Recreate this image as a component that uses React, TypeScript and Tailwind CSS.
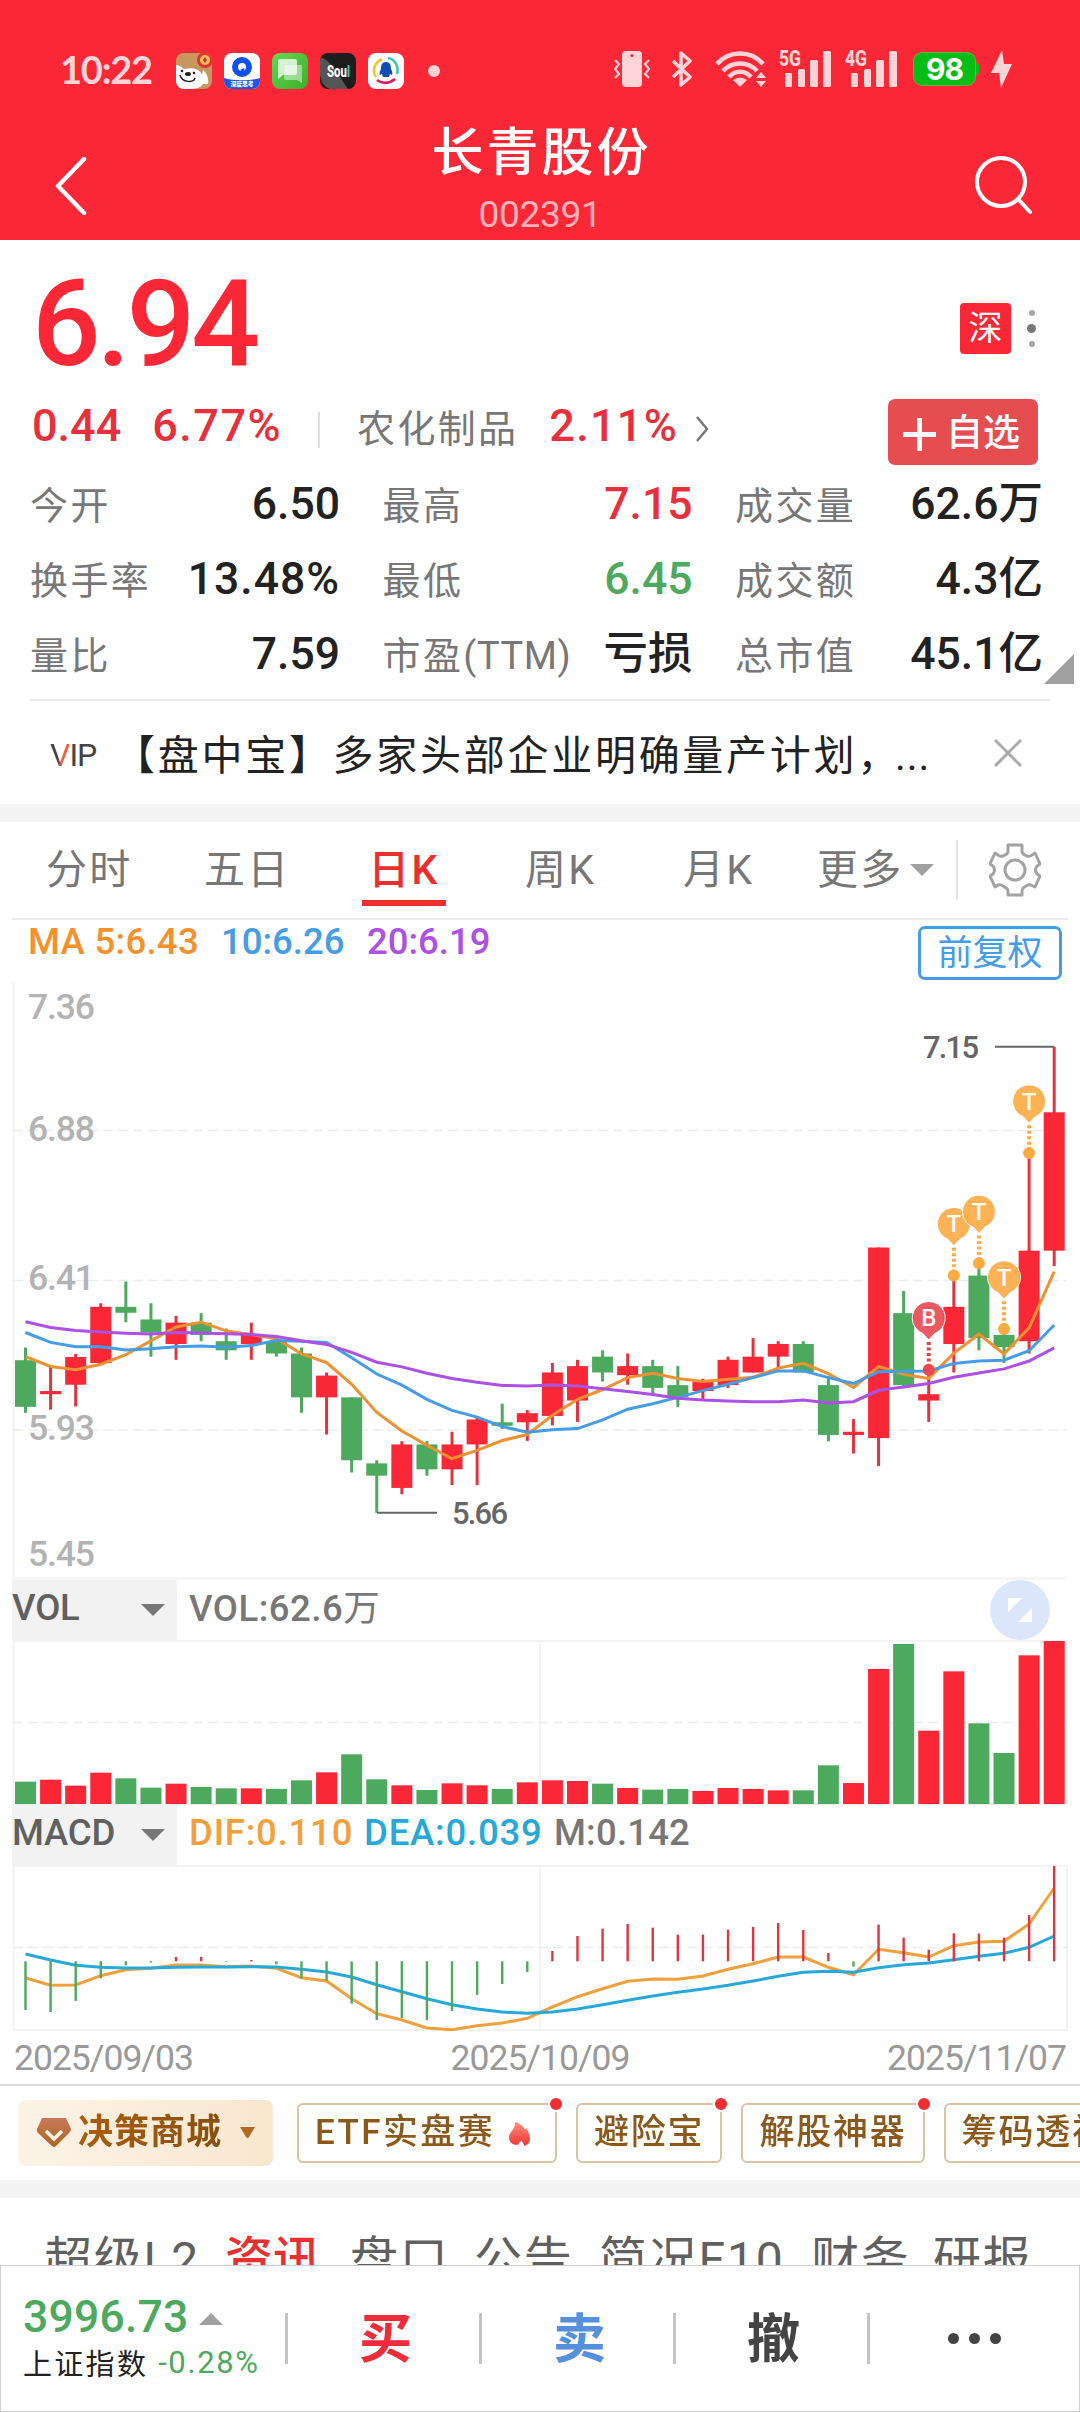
import React from "react";

type Candle = [number, number, number, number, 0 | 1];

// high, body top, body bottom, low, rising
const candles: Candle[] = [
	[980, 1012, 1130, 1145, 0],
	[1028, 1090, 1098, 1137, 1],
	[996, 1004, 1074, 1129, 1],
	[868, 877, 1019, 1019, 1],
	[813, 877, 892, 916, 0],
	[868, 909, 942, 1003, 0],
	[900, 917, 971, 1011, 1],
	[893, 917, 948, 964, 0],
	[932, 964, 987, 1011, 0],
	[917, 948, 971, 1011, 1],
	[964, 964, 995, 1003, 0],
	[980, 995, 1106, 1145, 0],
	[1043, 1051, 1106, 1200, 1],
	[1106, 1106, 1265, 1296, 0],
	[1265, 1273, 1304, 1398, 0],
	[1217, 1225, 1335, 1351, 1],
	[1217, 1225, 1288, 1304, 0],
	[1193, 1225, 1288, 1328, 1],
	[1154, 1162, 1225, 1328, 1],
	[1122, 1169, 1178, 1186, 0],
	[1138, 1146, 1169, 1216, 1],
	[1019, 1043, 1153, 1177, 1],
	[1011, 1027, 1114, 1168, 1],
	[987, 1003, 1043, 1066, 0],
	[995, 1027, 1050, 1074, 1],
	[1011, 1027, 1082, 1100, 0],
	[1027, 1075, 1106, 1130, 0],
	[1059, 1066, 1090, 1114, 1],
	[1003, 1011, 1075, 1082, 1],
	[956, 1003, 1043, 1043, 1],
	[964, 971, 1003, 1035, 1],
	[964, 971, 1043, 1043, 0],
	[1051, 1075, 1201, 1217, 0],
	[1161, 1193, 1201, 1248, 1],
	[727, 727, 1209, 1280, 1],
	[837, 893, 1075, 1082, 0],
	[1030, 1098, 1114, 1168, 1],
	[800, 877, 971, 1043, 1],
	[770, 798, 956, 987, 0],
	[933, 948, 979, 1019, 0],
	[490, 735, 964, 995, 1],
	[219, 385, 735, 774, 1],
];

const ma5 = [
	1003, 1028, 1036, 1022, 998, 963, 928, 916, 938, 947, 958, 996, 1018, 1073,
	1144, 1191, 1227, 1261, 1240, 1215, 1200, 1151, 1111, 1086, 1056, 1045, 1058,
	1066, 1060, 1055, 1032, 1020, 1046, 1081, 1028, 1048, 1058, 994, 946, 996,
	930, 788,
];
const ma10 = [
	942, 967, 978, 978, 986, 983, 978, 976, 979, 975, 962, 964, 967, 1006, 1047,
	1075, 1111, 1139, 1156, 1180, 1194, 1188, 1185, 1163, 1136, 1122, 1106, 1089,
	1073, 1056, 1039, 1039, 1056, 1071, 1041, 1040, 1039, 1020, 1014, 1012, 988,
	923,
];
const ma20 = [
	915, 929, 937, 941, 944, 946, 942, 943, 945, 947, 952, 963, 972, 992, 1017,
	1029, 1045, 1058, 1068, 1076, 1077, 1075, 1077, 1084, 1091, 1099, 1108, 1113,
	1115, 1117, 1117, 1113, 1120, 1117, 1088, 1080, 1071, 1055, 1044, 1034, 1014,
	981,
];
const volumes = [
	67, 73, 55, 94, 77, 49, 61, 51, 47, 47, 45, 71, 95, 149, 74, 56, 42, 62, 56,
	45, 65, 71, 69, 61, 48, 43, 45, 39, 48, 45, 41, 41, 116, 63, 405, 480, 220,
	398, 242, 153, 446, 489,
];
const macd = [
	-146, -152, -119, -51, -12, -4, 13, 13, -2, 4, -9, -51, -59, -127, -176, -170,
	-177, -149, -101, -68, -32, 31, 76, 98, 112, 101, 80, 80, 95, 103, 115, 94,
	25, -16, 110, 71, 35, 84, 83, 71, 139, 286,
];
const dif = [
	1224, 1246, 1245, 1217, 1199, 1195, 1185, 1185, 1190, 1188, 1195, 1223, 1233,
	1286, 1331, 1350, 1374, 1379, 1367, 1359, 1345, 1311, 1280, 1256, 1234, 1227,
	1228, 1218, 1198, 1181, 1161, 1161, 1192, 1214, 1138, 1148, 1161, 1127, 1116,
	1114, 1062, 954,
];
const dea = [
	1152, 1170, 1186, 1192, 1194, 1194, 1192, 1191, 1191, 1190, 1191, 1198, 1206,
	1221, 1244, 1265, 1286, 1304, 1317, 1326, 1330, 1326, 1317, 1304, 1291, 1278,
	1267, 1257, 1246, 1233, 1219, 1207, 1204, 1207, 1193, 1184, 1179, 1169, 1159,
	1150, 1132, 1098,
];

const RED = "#fa2836";
const GREEN = "#4da95e";

const cx = (i: number) => 25.5 + i * 25.09;
const ky = (v: number) => (v - 53) / 2.529;
const my = (v: number) => (v - 888) / 3 + 1;
const points = (values: number[], y: (v: number) => number) =>
	values.map((v, i) => `${cx(i).toFixed(1)},${y(v).toFixed(1)}`).join(" ");

const pins = [
	{ i: 37, y: 667, label: "T" },
	{ i: 38, y: 636, label: "T" },
	{ i: 39, y: 802, label: "T" },
	{ i: 40, y: 357, label: "T" },
	{ i: 36, y: 905, label: "B" },
];

const Caret: React.FC<{ color: string }> = ({ color }) => (
	<svg width="24" height="12" viewBox="0 0 24 12">
		<path d="M0 0h24L12 12z" fill={color} />
	</svg>
);

const Signal: React.FC<{ label: string }> = ({ label }) => (
	<svg className="overflow-visible" width="52" height="40" viewBox="0 0 52 40" fill="#ffd4d7">
		<text x="0" y="17" fontSize="22" fontWeight="800" textLength="22" lengthAdjust="spacingAndGlyphs">
			{label}
		</text>
		<rect x="6" y="24" width="7" height="14" rx="1.5" />
		<rect x="19" y="20" width="7" height="18" rx="1.5" />
		<rect x="31" y="11" width="8" height="27" rx="1.5" />
		<rect x="44" y="2" width="8" height="36" rx="1.5" />
	</svg>
);

const StatusBar: React.FC = () => (
	<div className="flex h-[110px] items-end pb-[21px] pl-[60px] text-[#ffd4d7]">
		<div className="flex h-9 w-[116px] items-center pb-1 font-['Lato','Roboto',sans-serif] text-[38px] font-bold leading-9 tracking-[-1.2px]">
			10:22
		</div>
		<div className="flex gap-3">
			<svg width="36" height="36" viewBox="0 0 36 36">
				<defs>
					<clipPath id="tile">
						<rect width="36" height="36" rx="8" />
					</clipPath>
				</defs>
				<g clipPath="url(#tile)">
					<rect width="36" height="36" fill="#c8965f" />
					<path d="M0 12c5 0 6 4 9 4 8-2 15 0 17 6l1-5c4 3 6 9 5 14h-5c-2 4-8 5-14 5H6c-4-1-6-3-6-7z" fill="#fff" />
					<circle cx="29" cy="7" r="8" fill="#d93a2c" />
					<circle cx="29" cy="7" r="5" fill="#f3bb5e" />
					<path d="M29 4l2 3-2 3-2-3z" fill="#c0392b" />
				</g>
				<ellipse cx="12" cy="21" rx="3" ry="2" fill="#222" />
				<circle cx="6" cy="18" r="1.3" fill="#222" />
				<circle cx="18" cy="20" r="1.3" fill="#222" />
				<path d="M4 22c2 8 14 8 15 3" stroke="#222" strokeWidth="1.5" fill="none" />
			</svg>
			<svg width="36" height="36" viewBox="0 0 36 36">
				<g clipPath="url(#tile)">
					<rect width="36" height="36" fill="#fff" />
					<path d="M0 25c9 3 27 3 36 0v11H0z" fill="#1f55e8" />
				</g>
				<circle cx="18" cy="14" r="7" stroke="#0f50f5" strokeWidth="6" fill="none" />
				<path d="M16 17l4-2 1 5z" fill="#0f50f5" />
				<text x="18" y="33" fontSize="5.800" fontWeight="900" textAnchor="middle" fill="#fff">
					深度思考
				</text>
			</svg>
			<svg width="36" height="36" viewBox="0 0 36 36">
				<defs>
					<linearGradient id="msg" x1="0" y1="0" x2="1" y2="1">
						<stop offset="0" stopColor="#62d84f" />
						<stop offset="1" stopColor="#3eae2b" />
					</linearGradient>
				</defs>
				<rect width="36" height="36" rx="8" fill="url(#msg)" />
				<path d="M13 12h17v18l-5-3H14q-2 0-2-2z" fill="#fff" opacity=".45" />
				<path d="M8 6h15q2 0 2 2v12q0 2-2 2H11l-5 4V8q0-2 2-2z" fill="#fff" opacity=".75" />
			</svg>
			<svg width="36" height="36" viewBox="0 0 36 36">
				<g clipPath="url(#tile)">
					<rect width="36" height="36" fill="#1d1d1d" />
					<path d="M0 4c12 4 17 16 28 32H10C4 34 0 28 0 20z" fill="#555" />
				</g>
				<text x="7" y="24" fontSize="17" fontWeight="800" textLength="23" lengthAdjust="spacingAndGlyphs" fill="#fff">
					Sou<tspan fill="#2fd3c4">l</tspan>
				</text>
			</svg>
			<svg width="36" height="36" viewBox="0 0 36 36" fill="none" strokeWidth="2.6">
				<rect width="36" height="36" rx="8" fill="#fff" />
				<path d="M8 24c-4-6-2-14 6-18" stroke="#f5c62b" />
				<path d="M20 5c7 1 11 8 9 16" stroke="#3cc9a2" />
				<path d="M9 27c5 4 12 4 18-1" stroke="#e0165d" />
				<path d="M18 9c4 0 5 3 5 7 1 2 2 4 1 6l-2-1-1 3h-6l-1-3-2 1c-1-2 0-4 1-6 0-4 1-7 5-7z" fill="#0f4fb5" />
			</svg>
		</div>
		<div className="mb-3 ml-6 h-3 w-3 rounded-full bg-[#ffd4d7]" />
		<div className="ml-[174px] flex items-center">
			<svg width="36" height="36" viewBox="0 0 36 36" fill="none" stroke="#ffd4d7" strokeWidth="2.200">
				<rect x="8" y="0" width="20" height="36" rx="4" fill="#ffd4d7" stroke="none" />
				<circle cx="18" cy="4.500" r="1.600" fill={RED} stroke="none" />
				<path d="M1 9l4 4-4 5 4 5-4 4M35 9l-4 4 4 5-4 5 4 4" />
			</svg>
			<svg className="ml-[21px]" width="22" height="36" viewBox="0 0 22 36" fill="none" stroke="#ffd4d7" strokeWidth="3.600">
				<path d="M2 10l17 16-9 8V2l9 8L2 26" strokeLinejoin="round" />
			</svg>
			<svg className="ml-[22px]" width="52" height="36" viewBox="0 0 52 36" fill="none" stroke="#ffd4d7" strokeWidth="4.500">
				<path d="M2 13C14-1 36-1 48 13M8 20c9-10 25-10 34 0M14 26c6-7 16-7 22 0" />
				<path d="M25 36l-7-7q7-5 14 0z" fill="#ffd4d7" stroke="none" />
				<path d="M46 21l5 6H41zM46 36l5-6H41z" fill="#ffd4d7" stroke="none" />
			</svg>
			<div className="ml-3 flex gap-3.5">
				<Signal label="5G" />
				<Signal label="4G" />
			</div>
			<div className="ml-4 flex h-[34px] w-[63px] items-center justify-center rounded-[9px] border border-[#7fa839] bg-[#04bd17] font-['Inter',sans-serif] text-[30px] font-bold leading-none tracking-[-1px] text-white">
				98
			</div>
			<div className="h-3 w-[3px] rounded-r bg-[#04bd17]" />
			<svg className="ml-3" width="21" height="38" viewBox="0 0 21 38" fill="#ffd4d7">
				<path d="M11 0L0 23h8l2 15L21 14h-8z" />
			</svg>
		</div>
	</div>
);

const Header: React.FC = () => (
	<header className="h-60 bg-[#fa2836]">
		<StatusBar />
		<div className="flex h-[130px] justify-between pl-[54px] pr-12">
			<svg className="mt-[47px]" width="54" height="58" viewBox="0 0 54 58" fill="none" stroke="#fff" strokeWidth="4.500">
				<path d="M30 2L4 29l26 27" strokeLinecap="round" strokeLinejoin="round" />
			</svg>
			<div className="flex flex-col items-center">
				<h1 className="mt-[11px] pl-[3px] text-[52px] font-medium leading-[66px] tracking-[3px] text-white">
					长青股份
				</h1>
				<p className="mt-1.5 text-[37px] leading-[44px] tracking-[-0.3px] text-[#ffb3b8]">
					002391
				</p>
			</div>
			<svg className="mt-[46px]" width="60" height="60" viewBox="-1 0 60 60" fill="none" stroke="#fff" strokeWidth="4">
				<circle cx="28" cy="26" r="24" />
				<path d="M45 43l12 13" strokeLinecap="round" />
			</svg>
		</div>
	</header>
);

const stats = [
	["今开", "", "6.50", "text-[#222]"],
	["最高", "", "7.15", "text-[#e8303c]"],
	["成交量", "", "62.6万", "text-[#222]"],
	["换手率", "", "13.48%", "text-[#222] tracking-[1px]"],
	["最低", "", "6.45", "text-[#4da95e]"],
	["成交额", "", "4.3亿", "text-[#222]"],
	["量比", "", "7.59", "text-[#222]"],
	["市盈", "(TTM)", "亏损", "text-[#222]"],
	["总市值", "", "45.1亿", "text-[#222]"],
];

const Quote: React.FC = () => (
	<section className="h-[564px]">
		<div className="flex h-[147px] justify-between pl-8 pr-11">
			<div className="mt-7 text-[121px] font-medium leading-[112px] tracking-[-4px] text-[#fa2836]">
				6.94
			</div>
			<div className="mt-[63px] flex">
				<div className="flex h-[51px] w-[51px] items-center justify-center rounded-[4px] bg-[#fa2836] text-[34px] text-white">
					深
				</div>
				<div className="ml-4 flex h-[51px] flex-col items-center justify-center gap-2">
					<span className="h-1.5 w-1.5 rounded-full bg-[#a5a5a5]" />
					<span className="h-[9px] w-[9px] rounded-full bg-[#777]" />
					<span className="h-1.5 w-1.5 rounded-full bg-[#a5a5a5]" />
				</div>
			</div>
		</div>
		<div className="flex h-[90px] pl-8 pr-[42px] pt-3">
			<div className="flex h-[54px] items-center text-[45px] font-medium leading-[52px] text-[#e8303c]">
				<span>0.44</span>
				<span className="ml-[31px] tracking-[1.5px]">6.77%</span>
				<span className="ml-9 mt-2 h-9 w-0.5 bg-[#ddd]" />
				<span className="ml-[37px] mt-1.5 text-[38px] font-normal tracking-[2.3px] text-[#777]">
					农化制品
				</span>
				<span className="ml-[31px] tracking-[1.3px]">2.11%</span>
				<svg className="ml-[17px] mt-1.5" width="14" height="26" viewBox="0 0 14 26" fill="none" stroke="#777" strokeWidth="2.500">
					<path d="M2 1l10 12L2 25" />
				</svg>
			</div>
			<button className="ml-auto flex h-[66px] w-[150px] items-center rounded-[7px] bg-[#e54d50] pl-[15px] text-[37px] text-white">
				<svg className="mt-1" width="33" height="33" viewBox="0 0 33 33" stroke="#fff" strokeWidth="5">
					<path d="M16.500 0v33M0 16.500h33" />
				</svg>
				<span className="ml-2.5 pt-1 font-medium">自选</span>
			</button>
		</div>
		<div className="flex">
			<div className="grid w-[1043px] shrink-0 auto-rows-[75px] grid-cols-[310px_310px_308px] gap-x-[42.500px] pl-[30px]">
				{stats.map(([label, suffix, value, color]) => (
					<div key={label} className="flex h-[55px] items-center justify-between whitespace-nowrap">
						<span className="pt-1 text-[38px] tracking-[2.400px] text-[#777]">
							{label}
							<span className="tracking-[0.600px]">{suffix}</span>
						</span>
						<span className={`text-[44.500px] font-medium ${color}`}>
							{value}
						</span>
					</div>
				))}
			</div>
			<svg className="mt-[177px]" width="32" height="30" viewBox="-1 0 32 30">
				<path d="M30 0v30H0z" fill="#a0a0a0" />
			</svg>
		</div>
		<div className="mx-[30px] -mt-[3px] h-0.5 bg-[#ebebeb]" />
		<div className="flex h-[103px] items-center pl-[50px]">
			<span className="w-[64px] pt-1 text-[32px] leading-none tracking-[-1px] text-[#444]">
				<span className="bg-linear-to-r from-[#444] from-40% to-[#f0603a] to-60% bg-clip-text text-transparent">
					V
				</span>
				IP
			</span>
			<p className="whitespace-nowrap pt-2 text-[41px] tracking-[2.720px] text-[#222]">
				【盘中宝】多家头部企业明确量产计划，
				<span className="-ml-1.5 tracking-[1px]">...</span>
			</p>
			<svg className="ml-auto mr-[58px]" width="28" height="28" viewBox="0 0 28 28" stroke="#aaa" strokeWidth="3">
				<path d="M1 1l26 26M27 1L1 27" />
			</svg>
		</div>
	</section>
);

const Tabs: React.FC = () => (
	<nav className="mx-3 flex h-[98px] border-b-2 border-[#ebebeb] text-[41px] text-[#777]">
		<div className="grid grid-cols-[158px_158px_163px_158px_134px_93px] whitespace-nowrap pl-[34px] leading-[96px] tracking-[2.300px]">
			<span>分时</span>
			<span>五日</span>
			<span className="flex w-[84px] flex-col items-center text-[#e93030]">
				<span className="h-[78px] font-medium">日K</span>
				<span className="h-1.5 w-full bg-[#ed2f2f]" />
			</span>
			<span>周K</span>
			<span>月K</span>
			<span>更多</span>
		</div>
		<div className="pt-[42px]">
			<Caret color="#a0a0a0" />
		</div>
		<div className="ml-[22px] mt-[18px] h-[60px] w-0.5 bg-[#e4e4e4]" />
		<svg className="ml-[31px] mt-[21px]" width="52" height="54" viewBox="0 0 52 54" fill="none" stroke="#a3a3a3" strokeWidth="3">
			<path
				d="M19 2h14v6q0 3 3 4l2 1q3 1 5-1l3-2 5 11-3 2q-3 4 0 8l3 2-5 11-4-2q-3-1-5 1l-3 2q-1 1-1 4v3H19v-3q0-3-2-4l-3-2q-2-2-5-1l-3 2L1 33l3-2q3-4 0-8l-3-2 5-11 3 2q2 2 5 1l2-1q3-1 3-4z"
				strokeLinejoin="round"
			/>
			<circle cx="26" cy="27" r="10" />
		</svg>
	</nav>
);

const Legend: React.FC = () => (
	<div className="flex h-[61px] pl-7 text-[36.500px] font-medium leading-[44px]">
		<div className="grid grid-cols-[193px_146px_1fr] whitespace-nowrap">
			<span className="tracking-[0.300px] text-[#f5902b]">MA 5:6.43</span>
			<span className="text-[#459de8]">10:6.26</span>
			<span className="text-[#ad50e6]">20:6.19</span>
		</div>
		<div className="ml-auto mr-[18px] mt-1.5 flex h-[54px] w-36 items-center justify-center rounded-[7px] border-3 border-[#459de8] pt-0.5 text-[35px] font-normal text-[#459de8]">
			前复权
		</div>
	</div>
);

const grid = { stroke: "#ececec", strokeWidth: 1.5, strokeDasharray: "10 5" };

const KChart: React.FC = () => (
	<svg className="block" width="1080" height="599" viewBox="0 0 1080 599">
		<path d="M13.500 0V598M13 597.500H1067" stroke="#f3f3f3" strokeWidth="2" />
		{[149.500, 299.500, 449].map((y) => (
			<line key={y} x1="13" x2="1067" y1={y} y2={y} {...grid} />
		))}
		<g fontSize="35.500" fontWeight="500" fill="#b3b3b3">
			{[
				["7.36", 38],
				["6.88", 160],
				["6.41", 309],
				["5.93", 458.500],
				["5.45", 585],
			].map(([label, y]) => (
				<text key={label} x="28" y={y} textLength="67">
					{label}
				</text>
			))}
		</g>
		{candles.map(([high, top, bottom, low, up], i) => (
			<g key={i} fill={up ? RED : GREEN}>
				<rect x={cx(i) - 1.500} y={ky(high)} width="3" height={ky(low) - ky(high)} fill={up ? "#e03440" : GREEN} />
				<rect x={cx(i) - 10.500} y={ky(top)} width="21" height={ky(bottom) - ky(top)} />
			</g>
		))}
		<g fill="none" strokeWidth="3">
			<polyline points={points(ma5, ky)} stroke="#f09030" />
			<polyline points={points(ma10, ky)} stroke="#459de8" />
			<polyline points={points(ma20, ky)} stroke="#ad50e6" />
		</g>
		<path d={`M377 ${ky(1398)}H437M995 ${ky(219)}H1054`} stroke="#666" strokeWidth="2" />
		<g fontSize="31" fontWeight="500" fill="#666">
			<text x="452" y="543" textLength="56">
				5.66
			</text>
			<text x="923" y="77" textLength="56">
				7.15
			</text>
		</g>
		{pins.map(({ i, y, label }) => (
			<g key={i} transform={`translate(${cx(i)} ${ky(y)})`} fill={label === "B" ? "#ea4850" : "#fdaa42"}>
				<path
					d="M0 22l-6-6.500A16.500 16.500 0 1 1 6 15.500z"
					fillOpacity=".9"
					stroke="#fff"
					strokeWidth="1"
				/>
				<path d="M0 24V47" stroke={label === "B" ? "#e0404a" : "#fdaa42"} strokeWidth="4" strokeDasharray="3 2.500" />
				<circle cy="51.800" r="6" />
				<text y="8.500" fontSize="24" fontWeight="500" textAnchor="middle" fill="#fff">
					{label}
				</text>
			</g>
		))}
	</svg>
);

const IndicatorSelect: React.FC<{ name: string }> = ({ name }) => (
	<div className="flex h-[60px] w-[165px] shrink-0 items-center justify-between bg-[#f2f2f2] pr-3 text-[#606060]">
		<span className="pb-1 tracking-[-0.200px]">{name}</span>
		<Caret color="#777" />
	</div>
);

const Frame: React.FC = () => (
	<>
		<path d="M13.500 1H1067V165H13.500zM540 1V165" fill="none" stroke="#f3f3f3" strokeWidth="2" />
		<line x1="13" x2="1067" y1="82.500" y2="82.500" {...grid} />
	</>
);

const Indicators: React.FC = () => (
	<section className="text-[36.500px] font-medium leading-[46px]">
		<div className="flex h-[60px] items-center pl-3">
			<IndicatorSelect name="VOL" />
			<span className="ml-3 whitespace-nowrap pb-0.5 tracking-[0.500px] text-[#777]">
				VOL:62.6<span className="font-normal">万</span>
			</span>
			<svg className="ml-auto mr-[30px]" width="60" height="60" viewBox="0 0 60 60">
				<circle cx="30" cy="30" r="30" fill="#dce6fb" />
				<path d="M18 18h14L18 32zM42 28v14H28z" fill="#fff" />
			</svg>
		</div>
		<svg className="block" width="1080" height="165" viewBox="0 0 1080 165">
			<Frame />
			{volumes.map((v, i) => (
				<rect key={i} x={cx(i) - 10.500} y={164 - v / 3} width="21" height={v / 3} fill={candles[i][4] ? RED : GREEN} />
			))}
		</svg>
		<div className="flex h-[60px] items-center pl-3">
			<IndicatorSelect name="MACD" />
			<div className="ml-3 grid grid-cols-[175px_190px_1fr] whitespace-nowrap pb-1 tracking-[0.800px]">
				<span className="text-[#f4a03a]">DIF:0.110</span>
				<span className="text-[#26a9d8]">DEA:0.039</span>
				<span className="tracking-[0.200px] text-[#777]">M:0.142</span>
			</div>
		</div>
		<svg className="block" width="1080" height="166" viewBox="0 0 1080 166">
			<Frame />
			<g fill="none" strokeWidth="3">
				<polyline points={points(dif, my)} stroke="#f0a03c" />
				<polyline points={points(dea, my)} stroke="#26a9d8" />
			</g>
			{macd.map((v, i) => (
				<rect
					key={i}
					x={cx(i) - 1.200}
					y={v > 0 ? 96.300 - v / 3 : 96.300}
					width="2.400"
					height={Math.abs(v) / 3}
					fill={v > 0 ? "#e03440" : GREEN}
				/>
			))}
		</svg>
		<div className="flex h-[55px] justify-between border-b-2 border-[#dcdcdc] pl-3.5 pr-[14px] pt-1 text-[35.500px] font-normal tracking-[-1px] text-[#999]">
			<span>2025/09/03</span>
			<span>2025/10/09</span>
			<span>2025/11/07</span>
		</div>
	</section>
);

const Chip: React.FC<{ children: React.ReactNode; dot?: boolean }> = ({
	children,
	dot = true,
}) => (
	<div className="relative flex h-[60px] shrink-0 items-center rounded-[6px] border-2 border-[#d8c4a5] px-[16px]">
		<span className="bg-linear-to-b from-[#855a22] to-[#94560c] bg-clip-text text-transparent">
			{children}
		</span>
		{dot && (
			<span className="absolute -right-[9px] -top-[9px] h-4 w-4 rounded-full border-2 border-white bg-[#ed2f2f]" />
		)}
	</div>
);

const Chips: React.FC = () => (
	<div className="flex h-[94px] items-start gap-[19px] overflow-hidden whitespace-nowrap pl-[18px] pt-[14px] text-[35px] font-medium leading-[52px] tracking-[1.800px]">
		<div className="mr-[5px] flex h-[66px] w-[255px] shrink-0 items-center rounded-[8px] bg-linear-to-r from-[#fcf3e7] to-[#f8e7cf] pl-[18px] tracking-[1px]">
			<svg width="36" height="30" viewBox="0 0 36 30">
				<defs>
					<linearGradient id="gem" x1="0" y1="0" x2="0" y2="1">
						<stop offset="0" stopColor="#c77a5c" />
						<stop offset="1" stopColor="#b0641d" />
					</linearGradient>
				</defs>
				<path d="M6 0h24l5 11q0 2-2 4L20 28q-2 2-4 0L2 15q-2-2-1-4z" fill="url(#gem)" />
				<path d="M10 13l8 8 8-8" stroke="#fcf3e7" strokeWidth="3.500" fill="none" />
			</svg>
			<span className="ml-1.5 bg-linear-to-r from-[#ad5e0a] to-[#87500f] bg-clip-text font-bold text-transparent">
				决策商城
			</span>
			<svg className="ml-[18px]" width="15" height="12" viewBox="0 0 15 12">
				<path d="M0 0h15l-6 10q-1.500 2-3 0z" fill="#b56a20" />
			</svg>
		</div>
		<div className="flex gap-[19px] pt-[3px]">
			<div className="relative w-[260px] shrink-0">
				<Chip>
					<span className="inline-block w-[222px] tracking-[2.400px]">
						ETF实盘赛
					</span>
				</Chip>
				<svg className="absolute right-[27px] top-[19px]" width="21" height="24" viewBox="0 0 21 24">
					<defs>
						<linearGradient id="fire" x1="0" y1="0" x2="0" y2="1">
							<stop offset="0" stopColor="#ff8f7a" />
							<stop offset="1" stopColor="#ef3434" />
						</linearGradient>
					</defs>
					<path d="M6 0c5 1 9 5 10 8l1-2c3 4 4 8 4 11 0 4-3 6-6 7 0-3-2-5-3-5-2 1-3 3-2 4-1-1-2-1-3 0C2 22 0 19 0 15 0 10 7 7 6 0z" fill="url(#fire)" />
				</svg>
			</div>
			<Chip>避险宝</Chip>
			<Chip>解股神器</Chip>
			<Chip dot={false}>筹码透视</Chip>
		</div>
	</div>
);

const BottomBar: React.FC = () => (
	<footer className="flex h-[147px] border border-[#cfcfcf] bg-white">
		<div className="w-[262px] pl-[22px] pt-[25px] font-medium">
			<div className="flex items-center text-[44.500px] leading-[52px] text-[#4da95e]">
				<span className="tracking-[0.200px]">3996.73</span>
				<svg className="ml-2.5 mt-1" width="24" height="12" viewBox="0 0 24 12">
					<path d="M12 0l12 12H0z" fill="#a0a0a0" />
				</svg>
			</div>
			<div className="flex items-center whitespace-nowrap text-[29px] leading-[40px] text-[#222]">
				<span className="font-normal tracking-[2.300px]">上证指数</span>
				<span className="ml-2.5 pb-1 text-[31px] font-normal tracking-[1.600px] text-[#4da95e]">
					-0.28%
				</span>
			</div>
		</div>
		<div className="flex grow items-start pl-[22px] pt-[47px] text-[53px] font-bold leading-[54px]">
			{[
				["买", "text-[#f02c3c]"],
				["卖", "text-[#5590dc]"],
				["撤", "text-[#444]"],
			].map(([label, color]) => (
				<div key={label} className={`h-[51px] w-[194px] border-l-3 border-[#c4c4c4] pl-1 text-center ${color}`}>
					{label}
				</div>
			))}
			<div className="flex h-[51px] w-[212px] items-center justify-center gap-[10px] border-l-3 border-[#c4c4c4]">
				<span className="h-[11px] w-[11px] rounded-full bg-[#444]" />
				<span className="h-[11px] w-[11px] rounded-full bg-[#444]" />
				<span className="h-[11px] w-[11px] rounded-full bg-[#444]" />
			</div>
		</div>
	</footer>
);

const App: React.FC = () => {
	return (
		<div className="h-[2412px] w-[1080px] overflow-hidden bg-white font-['Roboto','Noto_Sans_CJK_SC',sans-serif]">
			<Header />
			<Quote />
			<div className="h-[18px] bg-[#f4f4f4]" />
			<Tabs />
			<Legend />
			<KChart />
			<Indicators />
			<Chips />
			<div className="h-[18px] bg-[#f4f4f4]" />
			<div className="h-[67px] overflow-hidden pt-[29px]">
				<div className="grid grid-cols-[181px_125px_124px_125px_212px_122px_1fr] whitespace-nowrap pl-[44px] text-[48px] leading-[66px] tracking-[1.800px] text-[#606060]">
					<span>超级L2</span>
					<span className="font-medium tracking-[0px] text-[#e93030]">资讯</span>
					<span>盘口</span>
					<span>公告</span>
					<span>简况F10</span>
					<span>财务</span>
					<span>研报</span>
				</div>
			</div>
			<BottomBar />
		</div>
	);
};

export default App;
